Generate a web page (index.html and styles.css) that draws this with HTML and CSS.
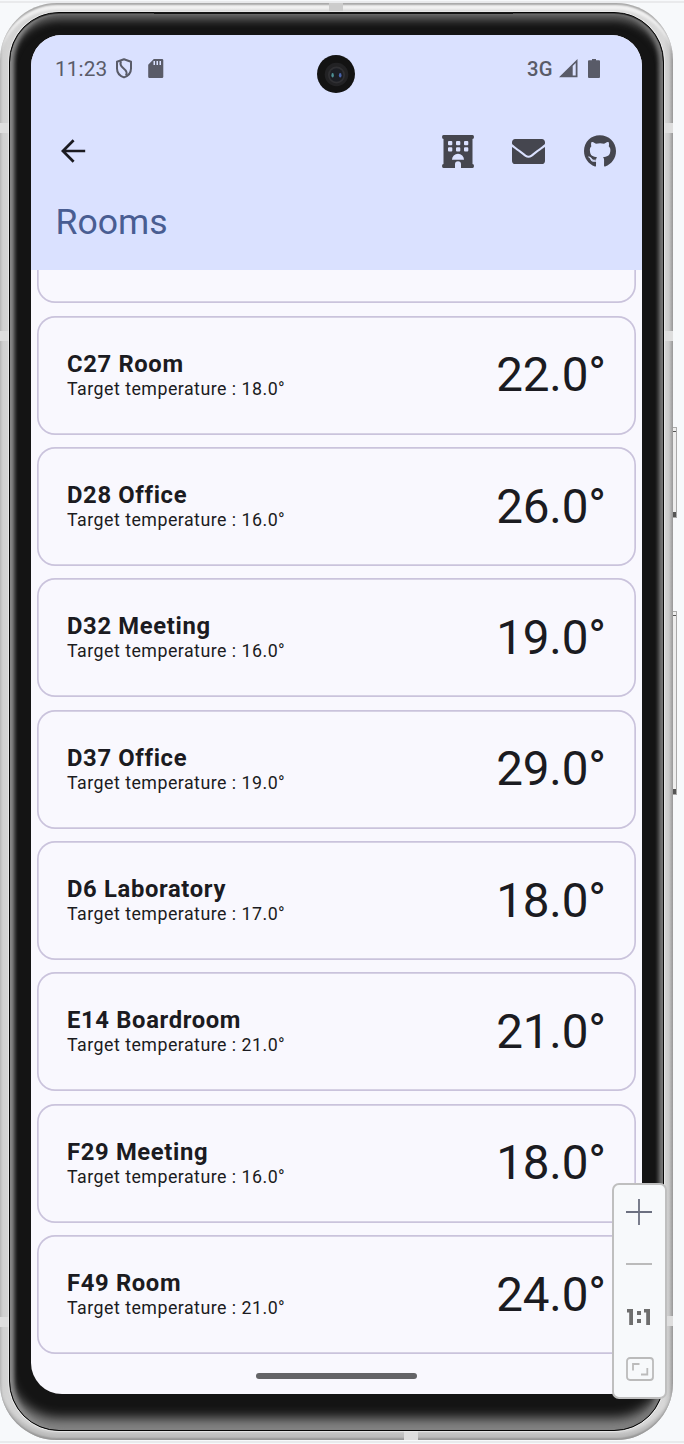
FILE: index.html
```html
<!DOCTYPE html>
<html lang="en">
<head>
<meta charset="utf-8">
<title>Rooms</title>
<link rel="stylesheet" href="styles.css">
</head>
<body>
<div class="stage">
  <div class="side-button power"></div>
  <div class="side-button volume"></div>
  <div class="phone">
    <i class="band band-top"></i><i class="band band-bottom"></i>
    <i class="band band-l1"></i><i class="band band-l2"></i><i class="band band-l3"></i>
    <i class="band band-r1"></i><i class="band band-r2"></i><i class="band band-r3"></i>
    <div class="bezel">
      <i class="speaker"></i>
      <div class="screen">
        <i class="camera"><svg width="38" height="38" viewBox="0 0 38 38"><circle cx="19" cy="19" r="19" fill="#131313"/><circle cx="19.500" cy="19.500" r="11.800" fill="#222224"/><circle cx="19.500" cy="20" r="8.500" fill="#303033"/><circle cx="19.500" cy="20" r="6.800" fill="#1c1e24"/><ellipse cx="15.600" cy="20.200" rx="1.200" ry="2.200" fill="#4f9295"/><ellipse cx="23.200" cy="20.200" rx="1.300" ry="2.200" fill="#4864ad"/></svg></i>
        <header class="header">
          <div class="status">
            <span class="clock">11:23</span>
            <svg class="shield" width="18" height="21" viewBox="0 0 18 21" fill="none" stroke="#595b68" stroke-width="2"><path d="M9 1.300 16 3.800V10.500C16 14.600 13 18 9 19.400 5 18 2 14.600 2 10.500V3.800Z" stroke-linejoin="round"/><path d="M6 3.300C4.600 6.200 5.500 8 8.400 10.300 11.800 13 12.400 14.600 11 17.500" stroke-width="2.100"/></svg>
            <svg class="sd" width="16" height="19" viewBox="0 0 16 19"><path fill="#595b68" fill-rule="evenodd" d="M5.800 0H14Q15.300 0 15.300 1.300V17.700Q15.300 19 14 19H1.500Q.2 19 .2 17.700V5.700ZM5.500 2V6H7V2ZM8.500 2V6H10V2ZM11.500 2V6H13V2Z"/></svg>
            <span class="network">3G</span>
            <svg class="signal" width="19" height="19" viewBox="0 0 19 19"><path fill="#595b68" fill-rule="evenodd" d="M0 18.300 18.500 0V18.300ZM13.700 7V16.600H16.700V4Z"/></svg>
            <svg class="battery" width="12" height="19" viewBox="0 0 12 19"><path fill="#595b68" d="M4 0H8V1.300H11Q12 1.300 12 2.300V18Q12 19 11 19H1Q0 19 0 18V2.300Q0 1.300 1 1.300H4Z"/></svg>
          </div>
          <div class="toolbar">
            <svg class="back" width="25" height="24" viewBox="0 0 25 24" fill="none" stroke="#1b1b21" stroke-width="2.700"><path d="M24.200 12H2M12.600 1.200 1.900 12 12.600 22.800"/></svg>
            <svg class="hotel" width="32" height="33" viewBox="0 0 32 33"><path fill="#45464f" fill-rule="evenodd" d="M1.500 0H30.500Q32 0 32 2T30.500 4V29Q32 29 32 31T30.500 33H19V29.300A3 3 0 0 0 13 29.300V33H1.500Q0 33 0 31T1.500 29V4Q0 4 0 2T1.500 0ZM7 6Q6 6 6 7V9.300Q6 10.300 7 10.300H9.300Q10.300 10.300 10.300 9.300V7Q10.300 6 9.300 6ZM15 6Q14 6 14 7V9.300Q14 10.300 15 10.300H17.300Q18.300 10.300 18.300 9.300V7Q18.300 6 17.300 6ZM23 6Q22 6 22 7V9.300Q22 10.300 23 10.300H25.300Q26.300 10.300 26.300 9.300V7Q26.300 6 25.300 6ZM7 12.300Q6 12.300 6 13.300V15.600Q6 16.600 7 16.600H9.300Q10.300 16.600 10.300 15.600V13.300Q10.300 12.300 9.300 12.300ZM15 12.300Q14 12.300 14 13.300V15.600Q14 16.600 15 16.600H17.300Q18.300 16.600 18.300 15.600V13.300Q18.300 12.300 17.300 12.300ZM23 12.300Q22 12.300 22 13.300V15.600Q22 16.600 23 16.600H25.300Q26.300 16.600 26.300 15.600V13.300Q26.300 12.300 25.300 12.300ZM10 24.700H22A6 6 0 0 0 10 24.700Z"/></svg>
            <svg class="mail" width="33" height="25" viewBox="0 64 512 384" preserveAspectRatio="none"><path fill="#45464f" d="M502.300 190.800c3.900-3.100 9.700-.2 9.700 4.700V400c0 26.500-21.500 48-48 48H48c-26.500 0-48-21.500-48-48V195.600c0-5 5.700-7.800 9.700-4.700 22.400 17.400 52.100 39.500 154.100 113.600 21.100 15.400 56.700 47.800 92.200 47.600 35.700.3 72-32.800 92.300-47.600 102-74.100 131.600-96.300 154-113.700zM256 320c23.200.4 56.600-29.200 73.400-41.400 132.700-96.300 142.800-104.700 173.400-128.700 5.800-4.500 9.200-11.500 9.200-18.900v-19c0-26.500-21.500-48-48-48H48c-26.500 0-48 21.500-48 48v19c0 7.400 3.400 14.300 9.200 18.900 30.600 23.900 40.700 32.400 173.400 128.700 16.800 12.200 50.200 41.800 73.400 41.400z"/></svg>
            <svg class="github" width="32" height="32" viewBox="0 8 496 488"><path fill="#45464f" d="M165.900 397.400c0 2-2.300 3.600-5.200 3.600-3.300.3-5.600-1.300-5.600-3.600 0-2 2.300-3.600 5.200-3.600 3-.3 5.600 1.300 5.600 3.600zm-31.100-4.500c-.7 2 1.300 4.300 4.300 4.900 2.600 1 5.600 0 6.200-2s-1.300-4.300-4.300-5.200c-2.600-.7-5.500.3-6.200 2.300zm44.200-1.700c-2.900.7-4.900 2.600-4.600 4.900.3 2 2.900 3.300 5.900 2.600 2.900-.7 4.900-2.600 4.600-4.600-.3-1.900-3-3.200-5.900-2.900zM244.800 8C106.100 8 0 113.300 0 252c0 110.900 69.800 205.800 169.500 239.200 12.800 2.300 17.300-5.600 17.300-12.100 0-6.200-.3-40.400-.3-61.400 0 0-70 15-84.700-29.800 0 0-11.400-29.100-27.800-36.600 0 0-22.900-15.700 1.600-15.400 0 0 24.900 2 38.600 25.800 21.900 38.600 58.600 27.500 72.900 20.900 2.300-16 8.800-27.100 16-33.700-55.900-6.200-112.300-14.300-112.300-110.500 0-27.500 7.600-41.300 23.600-58.900-2.600-6.500-11.100-33.300 2.600-67.900 20.900-6.500 69 27 69 27 20-5.600 41.500-8.500 62.800-8.500s42.800 2.900 62.800 8.500c0 0 48.100-33.600 69-27 13.700 34.700 5.200 61.400 2.600 67.900 16 17.700 25.800 31.500 25.800 58.900 0 96.500-58.900 104.200-114.800 110.500 9.200 7.900 17 22.900 17 46.400 0 33.700-.3 75.400-.3 83.600 0 6.500 4.600 14.400 17.300 12.100C428.200 457.800 496 362.900 496 252 496 113.300 383.500 8 244.800 8z"/></svg>
          </div>
          <h1>Rooms</h1>
        </header>
        <main class="list">
          <article class="card"></article>
          <article class="card"><div><h2>C27 Room</h2><p>Target temperature : 18.0°</p></div><strong>22.0°</strong></article>
          <article class="card"><div><h2>D28 Office</h2><p>Target temperature : 16.0°</p></div><strong>26.0°</strong></article>
          <article class="card"><div><h2>D32 Meeting</h2><p>Target temperature : 16.0°</p></div><strong>19.0°</strong></article>
          <article class="card"><div><h2>D37 Office</h2><p>Target temperature : 19.0°</p></div><strong>29.0°</strong></article>
          <article class="card"><div><h2>D6 Laboratory</h2><p>Target temperature : 17.0°</p></div><strong>18.0°</strong></article>
          <article class="card"><div><h2>E14 Boardroom</h2><p>Target temperature : 21.0°</p></div><strong>21.0°</strong></article>
          <article class="card"><div><h2>F29 Meeting</h2><p>Target temperature : 16.0°</p></div><strong>18.0°</strong></article>
          <article class="card"><div><h2>F49 Room</h2><p>Target temperature : 21.0°</p></div><strong>24.0°</strong></article>
        </main>
        <div class="home"></div>
      </div>
    </div>
  </div>
  <aside class="zoom">
    <svg width="26" height="26" viewBox="0 0 26 26" stroke="#6c7080" stroke-width="1.800"><path d="M13 0V26M0 13H26"/></svg>
    <svg width="26" height="2" viewBox="0 0 26 2"><path fill="#bbb" d="M0 0H26V2H0Z"/></svg>
    <svg width="24" height="17" viewBox="0 0 24 17" fill="#6e6e6e"><path d="M0 1H6V17H2.200V4.500H0ZM17 1H23V17H19.200V4.500H17ZM10 3H14V7H10ZM10 11H14V15H10Z"/></svg>
    <svg width="28" height="24" viewBox="0 0 28 24" fill="none" stroke="#bbb" stroke-width="1.800"><rect x="1" y="1" width="26" height="22" rx="3"/><path d="M7 13.500V7H13.500M15 17.500H21.300V11"/></svg>
  </aside>
</div>
</body>
</html>
```

FILE: styles.css
```css
* { box-sizing: border-box; }
body { margin: 0; background: #f7f9fb; font-family: Roboto, sans-serif; color: #1b1b21; }
h1, h2, p { margin: 0; }
svg { display: block; flex: none; }
.stage {
  position: relative;
  height: 1444px;
  padding-top: 3px;
  overflow: hidden;
  background: linear-gradient(#e9eaec, #e9eaec) 0 1px / 100% 2px no-repeat,
    linear-gradient(#e9eaec, #e9eaec) 0 1441px / 100% 2px no-repeat, #f7f9fb;
}
.phone {
  position: relative;
  width: 673px;
  height: 1437px;
  padding: 9px 9px 9px;
  border-radius: 57px;
  background: linear-gradient(90deg, #b8b8b8, #d0d0d0 3px, #d4d4d4 8px, #ccc 50%, #d8d8d8 664px, #c9c9c9 669px, #969696);
  box-shadow: inset 0 3px 2px -1px #a6a6a6, inset 0 10px 3px -3px #f2f2f2, inset 0 -3px 2px -1px #969696, inset 0 -10px 3px -3px #bdbdbd;
}
.bezel {
  position: relative;
  height: 1419px;
  padding: 22px 21px 36px;
  border: 1px solid #060606;
  border-radius: 50px;
  background: #141414;
  box-shadow: 0 0 0 1px rgba(240, 240, 240, .6), inset 0 1px 0 #444, inset 5px 0 4px -1px #8c8c8c, inset -5px 0 4px -1px #777, inset 0 9px 8px -2px #666, inset 0 -16px 12px -4px #858585;
}
.speaker { position: absolute; left: 144px; top: -1px; width: 359px; height: 2px; background: #151515; }
.screen {
  position: relative;
  display: flex;
  flex-direction: column;
  width: 611px;
  height: 1359px;
  overflow: hidden;
  border-radius: 31px;
  background: #f9f8fe;
}
.camera { position: absolute; left: 286px; top: 20px; }
.header { flex: none; height: 235px; padding: 21px 25px 0; background: #dae1ff; }
.status { display: flex; align-items: center; height: 25px; color: #595b68; font-size: 20.800px; }
.clock { width: 60px; margin-left: -1px; letter-spacing: .1px; }
.sd { margin-left: 15px; }
.network { margin-left: auto; font-weight: 500; font-size: 20.300px; letter-spacing: .3px; }
.signal { margin-left: 6px; }
.battery { margin: 0 17px 0 10px; }
.toolbar { display: flex; align-items: center; height: 34px; margin-top: 53px; }
.back { margin-left: 5px; }
.hotel { margin-left: auto; }
.mail { margin: 0 39px 0 38.500px; }
.github { margin-right: 1px; }
.header h1 { margin: 33px 0 0 -.5px; color: #495d92; font-weight: 400; font-size: 35.600px; line-height: 42px; }
.list { display: flex; flex-direction: column; gap: 12.330px; margin-top: -85.600px; padding: 0 6px; clip-path: inset(85.600px 0 0); }
.card {
  display: flex;
  flex: none;
  align-items: center;
  justify-content: space-between;
  height: 119px;
  padding: 0 30px;
  border-radius: 18px;
  box-shadow: inset 0 0 0 1.700px #cac3dc;
}
.card > div { padding-bottom: 3px; }
.card h2 { font-size: 23.800px; font-weight: 700; line-height: 30px; letter-spacing: .65px; }
.card p { font-size: 17.800px; line-height: 20px; letter-spacing: .48px; }
.card strong { font-size: 47.600px; font-weight: 400; letter-spacing: -.15px; }
.home { position: absolute; left: 225px; top: 1338px; width: 161px; height: 6px; border-radius: 3px; background: #646467; }
.band { position: absolute; width: 9px; height: 10px; background: #dedede; }
.band-top { left: 329px; top: 0; width: 14px; height: 9px; background: #ccc; }
.band-bottom { left: 404px; bottom: 0; width: 14px; height: 9px; }
.band-l1 { left: 0; top: 120px; }
.band-l2 { left: 0; top: 328px; }
.band-l3 { left: 0; top: 1314px; }
.band-r1 { right: 0; top: 120px; }
.band-r2 { right: 0; top: 328px; }
.band-r3 { right: 0; top: 1313px; }
.side-button {
  position: absolute;
  left: 672px;
  width: 5px;
  border: 1px solid #aaa;
  background: linear-gradient(transparent 3px, #555 3px, #555 4px, transparent 4px, transparent calc(100% - 5px), #555 calc(100% - 5px)), #eee;
}
.power { top: 427px; height: 91px; }
.volume { top: 611px; height: 184px; }
.zoom {
  position: absolute;
  left: 612px;
  top: 1183px;
  display: flex;
  flex-direction: column;
  align-items: center;
  width: 55px;
  height: 216px;
  padding: 14px 1px 0 0;
  border: 2px solid #bfbfbf;
  border-radius: 7px;
  background: #f7f9fb;
}
.zoom svg:nth-child(2) { margin-top: 38px; }
.zoom svg:nth-child(3) { margin-top: 43px; }
.zoom svg:nth-child(4) { margin: 32px 0 0 2px; }
```
